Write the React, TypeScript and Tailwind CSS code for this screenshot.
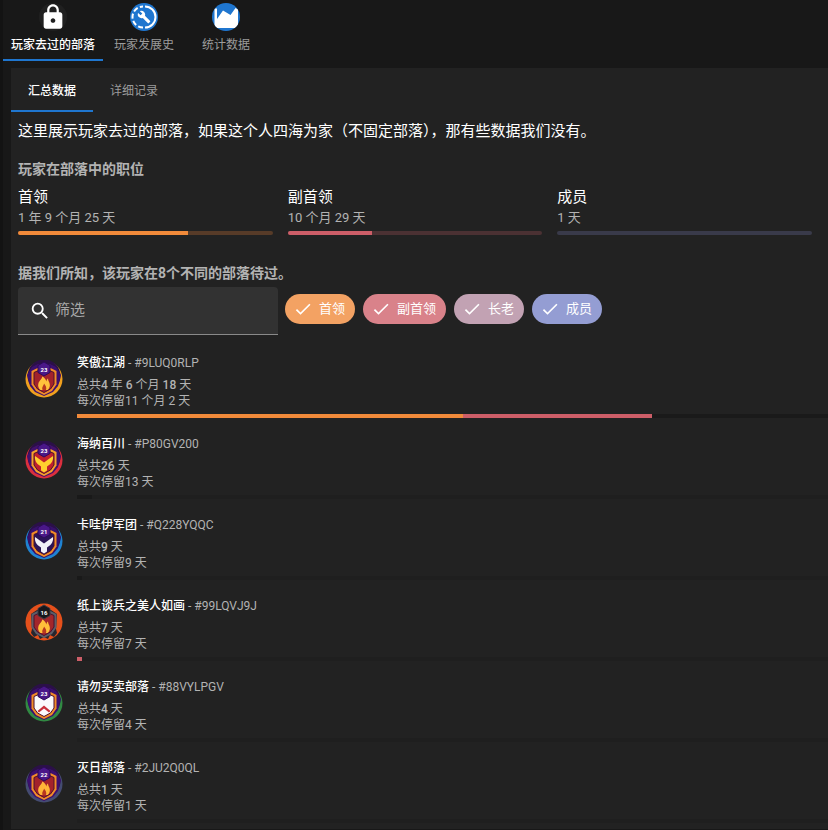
import { useState } from 'react';
import type { ReactNode } from 'react';
import { MdCheck, MdLock, MdSearch } from 'react-icons/md';

type Emblem = 'flame' | 'antlers' | 'chevron';

interface Clan {
  name: string;
  tag: string;
  total: ReactNode;
  perStay: string;
  level: number;
  emblem: Emblem;
  emblemColor: string;
  ring: string;
  shield: string;
  frame: string;
  field: string;
  filled?: boolean;
  segments: { color: string; width: number }[];
}

const roles = [
  { name: '首领', time: '1 年 9 个月 25 天', percent: 66.7, bar: 'bg-[#f18a3a]', track: 'bg-[#573b28]' },
  { name: '副首领', time: '10 个月 29 天', percent: 33.2, bar: 'bg-[#cd5e68]', track: 'bg-[#4b3133]' },
  { name: '成员', time: '1 天', percent: 0, bar: 'bg-[#7f86c4]', track: 'bg-[#393a4a]' },
];

const filters = [
  { name: '首领', color: 'bg-[#f3a263]' },
  { name: '副首领', color: 'bg-[#d9828a]' },
  { name: '长老', color: 'bg-[#c2a2b3]' },
  { name: '成员', color: 'bg-[#949dd3]' },
];

const clans: Clan[] = [
  {
    name: '笑傲江湖',
    tag: '#9LUQ0RLP',
    total: <><b>4</b> 年 <b>6</b> 个月 <b>18</b> 天</>,
    perStay: '11 个月 2 天',
    level: 23,
    emblem: 'flame',
    emblemColor: '#ffc23c',
    ring: '#f0a01e',
    shield: '#3c0f6e',
    frame: '#f28c28',
    field: '#a3222b',
    segments: [
      { color: 'bg-[#f18a3a]', width: 51.4 },
      { color: 'bg-[#cd5e68]', width: 25.2 },
      { color: 'bg-[#1a1a1a]', width: 23.4 },
    ],
  },
  {
    name: '海纳百川',
    tag: '#P80GV200',
    total: <><b>26</b> 天</>,
    perStay: '13 天',
    level: 23,
    emblem: 'antlers',
    emblemColor: '#ffd02e',
    ring: '#dc2f3e',
    shield: '#43106c',
    frame: '#f7a02a',
    field: '#c01f2e',
    segments: [{ color: 'bg-[#191919]', width: 2 }],
  },
  {
    name: '卡哇伊军团',
    tag: '#Q228YQQC',
    total: <><b>9</b> 天</>,
    perStay: '9 天',
    level: 21,
    emblem: 'antlers',
    emblemColor: '#f1eff8',
    ring: '#1f83d2',
    shield: '#37106a',
    frame: '#f28c28',
    field: '#2b1458',
    segments: [{ color: 'bg-[#191919]', width: 0.7 }],
  },
  {
    name: '纸上谈兵之美人如画',
    tag: '#99LQVJ9J',
    total: <><b>7</b> 天</>,
    perStay: '7 天',
    level: 16,
    emblem: 'flame',
    emblemColor: '#ffc03a',
    ring: '#e5501b',
    shield: '#26262e',
    frame: '#5d5d68',
    field: '#a3262b',
    filled: true,
    segments: [{ color: 'bg-[#cd5e68]', width: 0.6 }],
  },
  {
    name: '请勿买卖部落',
    tag: '#88VYLPGV',
    total: <><b>4</b> 天</>,
    perStay: '4 天',
    level: 23,
    emblem: 'chevron',
    emblemColor: '#c8303a',
    ring: '#318a43',
    shield: '#3c0f6e',
    frame: '#f28c28',
    field: '#fbfafc',
    segments: [],
  },
  {
    name: '灭日部落',
    tag: '#2JU2Q0QL',
    total: <><b>1</b> 天</>,
    perStay: '1 天',
    level: 22,
    emblem: 'flame',
    emblemColor: '#ffb638',
    ring: '#444b72',
    shield: '#3c0f6e',
    frame: '#f28c28',
    field: '#a3222b',
    segments: [],
  },
];

function HistoryIcon() {
  return (
    <svg viewBox="0 0 28 28" className="size-7" aria-hidden="true">
      <circle cx="14" cy="14" r="14" fill="#1f76cf" />
      <g fill="none" stroke="#fff" strokeWidth="2">
        <path d="M15 3.5a10.5 10.5 0 0 1 0 21" />
        <path d="M13 24.5A10.5 10.5 0 0 1 13 3.5" strokeDasharray="5 2.4" />
      </g>
      <g transform="translate(7.2 7.2) scale(0.57)">
        <path
          fill="#fff"
          d="M22.7 19l-9.1-9.1c.9-2.3.4-5-1.5-6.9-2-2-5-2.4-7.4-1.3L9 6 6 9 1.6 4.7C.4 7.1.9 10.1 2.9 12.1c1.9 1.9 4.6 2.4 6.9 1.5l9.1 9.1c.4.4 1 .4 1.4 0l2.3-2.3c.5-.4.5-1.1.1-1.4z"
        />
      </g>
    </svg>
  );
}

function StatsIcon() {
  return (
    <svg viewBox="0 0 28 28" className="size-7" aria-hidden="true">
      <clipPath id="stats-disc">
        <circle cx="14" cy="14" r="14" />
      </clipPath>
      <g clipPath="url(#stats-disc)">
        <rect width="28" height="28" fill="#1f76cf" />
        <path fill="#fff" d="M2.5 5.5V22a3 3 0 0 0 3 3h17.500a3 3 0 0 0 3-3V6.500L23.500 5l-5 7L11 7.500l-6 8.500V5.500z" />
      </g>
    </svg>
  );
}

function Badge({ clan }: { clan: Clan }) {
  return (
    <svg viewBox="0 0 38 38" className="size-[38px] shrink-0" role="img" aria-label={clan.name}>
      <circle cx="19" cy="19" r="18.5" fill={clan.ring} />
      {clan.filled ? (
        <path d="M6 11l6-4h14l6 4-1 15 1 4-3 4-4-2-2 4-4-2-4 2-2-4-4 2-3-4 1-4z" fill={clan.shield} />
      ) : (
        <>
          <circle cx="19" cy="16" r="16.5" fill="#2b1048" />
          <path d="M2 15l5-8 6-3h12l6 3 5 8-3 11-5 6-9 4-9-4-5-6z" fill={clan.shield} />
        </>
      )}
      <path d="M6.5 11l6-3h13l6 3v13.5L27 31l-8 4-8-4-4.5-6.5z" fill={clan.frame} />
      <path d="M9 12.5l4.5-2h11l4.500 2v11.500l-3.500 5L19 32.500 12.500 29 9 24z" fill={clan.field} stroke="#4d102c" strokeWidth="1" />
      {clan.emblem === 'flame' && (
        <>
          <path
            d="M17 16.500c.5 2-2.500 4-3.500 6.500-1 3 0 5.500 2 7h7c2-1.500 3-4 2-7-.5-1.500-1.500-2.500-1.500-4.500-1 .5-1.500 1.500-1.500 3-1-2.500-2-4-4.500-5z"
            fill={clan.emblemColor}
          />
          <path d="M19 23.500c0 2-2.500 3-1.500 6.500h3.500c1-2.500-.5-4.500-2-6.500z" fill="#b8391f" />
        </>
      )}
      {clan.emblem === 'antlers' && (
        <path
          d="M10 15l3.500 2.500 5.500 4 5.500-4L28 15c.5 4-1 7.500-6 10.500v4L19 31.500l-3-2v-4c-5-3-6.500-6.500-6-10.500z"
          fill={clan.emblemColor}
        />
      )}
      {clan.emblem === 'chevron' && (
        <path d="M12.5 27l6.500-5.500 6.500 5.500-1.500 1.500-5-4-5 4z" fill={clan.emblemColor} />
      )}
      <path d="M19 2l6 3.500v7L19 16l-6-3.500v-7z" fill={clan.filled ? '#17171c' : '#4a1788'} stroke={clan.filled ? '#3b3b44' : '#2c0b58'} />
      <text x="19" y="11.5" textAnchor="middle" fontSize="6" fontWeight="700" fill="#fff">
        {clan.level}
      </text>
    </svg>
  );
}

const topTabs = [
  {
    label: '玩家去过的部落',
    icon: (
      <span className="flex size-7 items-center justify-center rounded-full bg-[#202020] text-white">
        <MdLock className="size-7" />
      </span>
    ),
  },
  { label: '玩家发展史', icon: <HistoryIcon /> },
  { label: '统计数据', icon: <StatsIcon /> },
];

const subTabs = ['汇总数据', '详细记录'];

export default function App() {
  const [tab, setTab] = useState(0);
  const [subTab, setSubTab] = useState(0);
  const [query, setQuery] = useState('');
  const [active, setActive] = useState([true, true, true, true]);

  return (
    <div className="min-h-screen overflow-x-hidden border-l-3 border-[#131313] bg-[#181818] font-['Roboto','Noto_Sans_CJK_SC',sans-serif] text-white">
      <nav className="flex" role="tablist">
        {topTabs.map((item, i) => (
          <button
            key={item.label}
            role="tab"
            aria-selected={tab === i}
            onClick={() => setTab(i)}
            className={`flex min-w-[82px] flex-col items-center border-b-2 px-2 pt-[3px] pb-1.5 text-xs ${
              tab === i ? 'border-[#1f76cf] font-medium text-white' : 'border-transparent text-[#9c9c9c]'
            }`}
          >
            {item.icon}
            <span className="mt-1.5">{item.label}</span>
          </button>
        ))}
      </nav>

      <main className="mt-[7px] ml-2 bg-[#222222]">
        <div className="flex" role="tablist">
          {subTabs.map((label, i) => (
            <button
              key={label}
              role="tab"
              aria-selected={subTab === i}
              onClick={() => setSubTab(i)}
              className={`h-11 min-w-[82px] border-b-2 pt-1 text-xs ${
                subTab === i ? 'border-[#1f76cf] font-medium text-white' : 'border-transparent text-[#9c9c9c]'
              }`}
            >
              {label}
            </button>
          ))}
        </div>

        <div className="pt-2 pl-[7px]">
          <p className="text-[15px] leading-[22px]">这里展示玩家去过的部落，如果这个人四海为家（不固定部落），那有些数据我们没有。</p>

          <h2 className="mt-[17px] text-sm font-bold text-[#b3b3b3]">玩家在部落中的职位</h2>
          <div className="mt-2 grid grid-cols-3 gap-[15px] pr-4">
            {roles.map((role) => (
              <div key={role.name}>
                <div className="text-[15px] leading-5">{role.name}</div>
                <div className="text-[13px] leading-[22px] text-[#b3b3b3]">{role.time}</div>
                <div className={`mt-0.5 h-1 overflow-hidden rounded-sm ${role.track}`}>
                  <div className={`h-full ${role.bar}`} style={{ width: `${role.percent}%` }} />
                </div>
              </div>
            ))}
          </div>

          <h2 className="mt-7 text-sm font-bold text-[#b3b3b3]">据我们所知，该玩家在8个不同的部落待过。</h2>
          <div className="mt-1 flex gap-[7px]">
            <label className="flex h-12 w-[260px] items-center gap-1 rounded-t border-b border-[#8a8a8a] bg-[#323232] pl-[11px]">
              <MdSearch className="size-[22px]" />
              <input
                type="text"
                aria-label="筛选"
                placeholder="筛选"
                value={query}
                onChange={(e) => setQuery(e.target.value)}
                className="min-w-0 flex-1 bg-transparent text-[15px] outline-none placeholder:text-[#a8a8a8]"
              />
            </label>
            <div className="flex gap-2 pt-[7px]">
              {filters.map((filter, i) => (
                <button
                  key={filter.name}
                  aria-pressed={active[i]}
                  onClick={() => setActive(active.map((on, j) => (j === i ? !on : on)))}
                  className={`flex h-[30px] items-center gap-1.5 rounded-full pr-2.5 pl-2 text-[13px] ${filter.color}`}
                >
                  <MdCheck className={active[i] ? 'size-5' : 'invisible size-5'} />
                  {filter.name}
                </button>
              ))}
            </div>
          </div>

          <ul className="mt-[19px] pb-1.5">
            {clans
              .filter((clan) => clan.name.includes(query) || clan.tag.includes(query))
              .map((clan) => (
                <li key={clan.tag} className="mb-[17px] flex gap-3.5 pl-[7px] last:mb-0">
                  <div className="mt-1.5">
                    <Badge clan={clan} />
                  </div>
                  <div className="min-w-0 flex-1 pt-px text-xs leading-4 text-[#b3b3b3]">
                    <div>
                      <a href="#" className="font-medium text-white">{clan.name}</a> - {clan.tag}
                    </div>
                    <div className="mt-1.5 [&_b]:font-medium">总共{clan.total}</div>
                    <div>每次停留{clan.perStay}</div>
                    <div className="mt-[5px] flex h-1 bg-[#1f1f1f]">
                      {clan.segments.map((segment) => (
                        <div key={segment.color} className={segment.color} style={{ width: `${segment.width}%` }} />
                      ))}
                    </div>
                  </div>
                </li>
              ))}
          </ul>
        </div>
      </main>
    </div>
  );
}
